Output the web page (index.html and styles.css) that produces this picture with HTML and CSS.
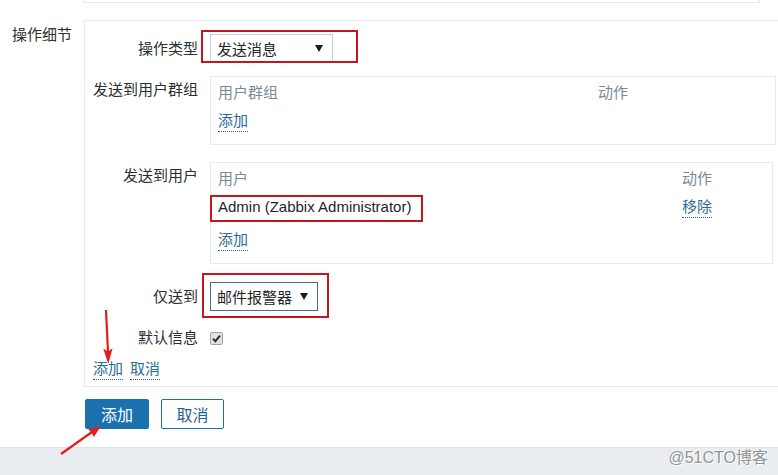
FILE: index.html
```html
<!DOCTYPE html>
<html lang="zh-CN">
<head>
<meta charset="utf-8">
<title>操作细节</title>
<link rel="stylesheet" href="styles.css">
</head>
<body>
<div class="page">
  <div class="top-strip"></div>

  <div class="section">
    <div class="section-label">操作细节</div>
    <div class="section-box">
      <div class="row row-a">
        <div class="label label-mid">操作类型</div>
        <div class="field">
          <div class="select select-1 annot annot-s1"><span>发送消息</span><i class="caret"></i></div>
        </div>
      </div>

      <div class="row row-b">
        <div class="label label-top">发送到用户群组</div>
        <div class="field">
          <div class="tbl tbl-1">
            <div class="tr"><span class="th">用户群组</span><span class="th">动作</span></div>
            <div class="tr"><span class="td"><a class="lnk">添加</a></span></div>
          </div>
        </div>
      </div>

      <div class="row row-c">
        <div class="label label-top">发送到用户</div>
        <div class="field">
          <div class="tbl tbl-2">
            <div class="tr"><span class="th">用户</span><span class="th">动作</span></div>
            <div class="tr tr-user"><span class="td"><span class="user annot annot-user">Admin (Zabbix Administrator)</span></span><span class="td"><a class="lnk">移除</a></span></div>
            <div class="tr"><span class="td"><a class="lnk">添加</a></span></div>
          </div>
        </div>
      </div>

      <div class="row row-d">
        <div class="label label-mid">仅送到</div>
        <div class="field">
          <div class="select select-2 annot annot-s2"><span>邮件报警器</span><i class="caret"></i></div>
        </div>
      </div>

      <div class="row row-e">
        <div class="label label-line">默认信息</div>
        <div class="field field-center">
          <span class="checkbox"><svg width="9" height="9" viewBox="0 0 9 9"><path d="M1 4.6 L3.4 7.2 L8 1.6" fill="none" stroke="#2e2e2e" stroke-width="2"/></svg></span>
        </div>
      </div>

      <div class="links">
        <a class="lnk">添加</a>
        <a class="lnk">取消</a>
      </div>
    </div>
  </div>

  <div class="buttons">
    <button class="btn btn-primary">添加</button>
    <button class="btn btn-secondary">取消</button>
  </div>

  <div class="footer"><span class="watermark">@51CTO博客</span></div>

  <svg class="arrows" width="778" height="475" viewBox="0 0 778 475">
    <line x1="106" y1="310" x2="108" y2="352" stroke="#e0201c" stroke-width="2.2"/>
    <polygon points="108.3,364 103.2,348.5 108,351.5 112.6,348.2" fill="#e0201c"/>
    <line x1="61" y1="454" x2="92" y2="432" stroke="#e0201c" stroke-width="2.2"/>
    <polygon points="101,426 93.9,437 91.4,432.6 88.3,429.2" fill="#e0201c"/>
  </svg>
</div>
</body>
</html>
```

FILE: styles.css
```css
* {
  box-sizing: border-box;
}

html, body {
  margin: 0;
  padding: 0;
  background: #ffffff;
}

body {
  font-family: "Liberation Sans", "Noto Sans CJK SC", sans-serif;
  font-size: 15px;
  color: #2b2f31;
}

.page {
  position: relative;
  width: 778px;
  height: 475px;
  overflow: hidden;
}

.top-strip {
  margin-left: 84px;
  width: 676px;
  height: 3px;
  border-left: 1px solid #e6eaec;
  border-right: 1px solid #e6eaec;
  border-bottom: 1px solid #e6eaec;
  margin-bottom: 17px;
}

.section {
  display: flex;
}

.section-label {
  width: 84px;
  flex: none;
  padding: 5px 0 0 12px;
  line-height: 20px;
  white-space: nowrap;
}

.section-box {
  flex: 1;
  border-top: 1px solid #e6eaec;
  border-left: 1px solid #e6eaec;
  border-bottom: 1px solid #e6eaec;
  padding: 0 0 6px 8px;
}

.row {
  display: flex;
  gap: 12px;
}

.label {
  width: 105px;
  flex: none;
  text-align: right;
  white-space: nowrap;
}

.label-mid {
  line-height: 29px;
}

.label-top {
  line-height: 20px;
  padding-top: 4px;
}

.label-line {
  line-height: 20px;
}

.field {
  flex: 1;
  display: flex;
}

.field-center {
  align-items: center;
}

.row-a { margin-top: 13px; }
.row-b { margin-top: 13px; }
.row-c { margin-top: 17px; }
.row-d { margin-top: 18px; }
.row-e { margin-top: 17px; }

/* select */
.select {
  height: 29px;
  display: flex;
  align-items: center;
  justify-content: space-between;
  padding: 0 9px 0 6px;
  background: #fff;
  color: #1f2426;
}

.select-1 {
  width: 123px;
  border: 1px solid #c3ccd1;
}

.select-2 {
  width: 108px;
  border: 1px solid #4f6f7d;
}

.caret {
  display: block;
  width: 0;
  height: 0;
  border-left: 4px solid transparent;
  border-right: 4px solid transparent;
  border-top: 7px solid #1a1a1a;
  margin-top: -1px;
}

/* annotations (red boxes laid over content) */
.annot {
  position: relative;
}

.annot::after {
  content: "";
  position: absolute;
  border: 2px solid #c3171d;
  pointer-events: none;
}

.annot-s1::after {
  top: -5px;
  bottom: -1px;
  left: -10px;
  right: -26px;
}

.annot-s2::after {
  top: -10px;
  bottom: -8px;
  left: -9px;
  right: -12px;
}

.annot-user::after {
  top: 2px;
  bottom: -1px;
  left: -8px;
  right: -12px;
}

/* tables */
.tbl {
  border: 1px solid #e6eaec;
  padding: 2px 7px 9px;
}

.tbl-1 {
  width: 566px;
}

.tbl-2 {
  width: 563px;
}

.tr {
  display: grid;
  height: 28px;
  align-items: center;
}

.tbl-1 .tr {
  grid-template-columns: 380px 1fr;
}

.tbl-2 .tr {
  grid-template-columns: 464px 1fr;
}

.tr-user {
  margin-bottom: 5px;
}

.th {
  color: #7c8a92;
  line-height: 28px;
}

.td {
  line-height: 28px;
  display: flex;
  align-items: center;
}

.user {
  display: inline-block;
  line-height: 28px;
  color: #1f2426;
}

.lnk {
  display: inline-block;
  line-height: 20px;
  color: #2d6b95;
  border-bottom: 1px dotted #2d6b95;
  cursor: pointer;
}

/* checkbox */
.checkbox {
  width: 13px;
  height: 13px;
  border: 1px solid #a2a2a2;
  border-radius: 2px;
  background: #e2e2e2;
  display: flex;
  align-items: center;
  justify-content: center;
}

.checkbox svg {
  display: block;
}

.links {
  display: flex;
  gap: 7px;
  margin-top: 11px;
}

/* buttons */
.buttons {
  display: flex;
  gap: 12px;
  margin: 12px 0 0 85px;
}

.btn {
  height: 30px;
  font-family: "Liberation Sans", "Noto Sans CJK SC", sans-serif;
  font-size: 16px;
  border-radius: 2px;
  padding: 0;
  cursor: pointer;
}

.btn-primary {
  width: 64px;
  background: #1a71ad;
  border: 1px solid #1a71ad;
  color: #ffffff;
}

.btn-secondary {
  width: 63px;
  background: #ffffff;
  border: 1px solid #1f6fa4;
  color: #1f6396;
}

/* footer */
.footer {
  margin-top: 18px;
  height: 28px;
  background: #eaedf0;
  border-top: 1px solid #dfe3e6;
  text-align: right;
  padding-right: 10px;
}

.watermark {
  line-height: 20px;
  font-size: 16px;
  color: #8f9396;
  text-shadow: 1px 1px 0 #ffffff, -1px -1px 0 #f4f4f4;
}

.arrows {
  position: absolute;
  left: 0;
  top: 0;
  pointer-events: none;
}
```
